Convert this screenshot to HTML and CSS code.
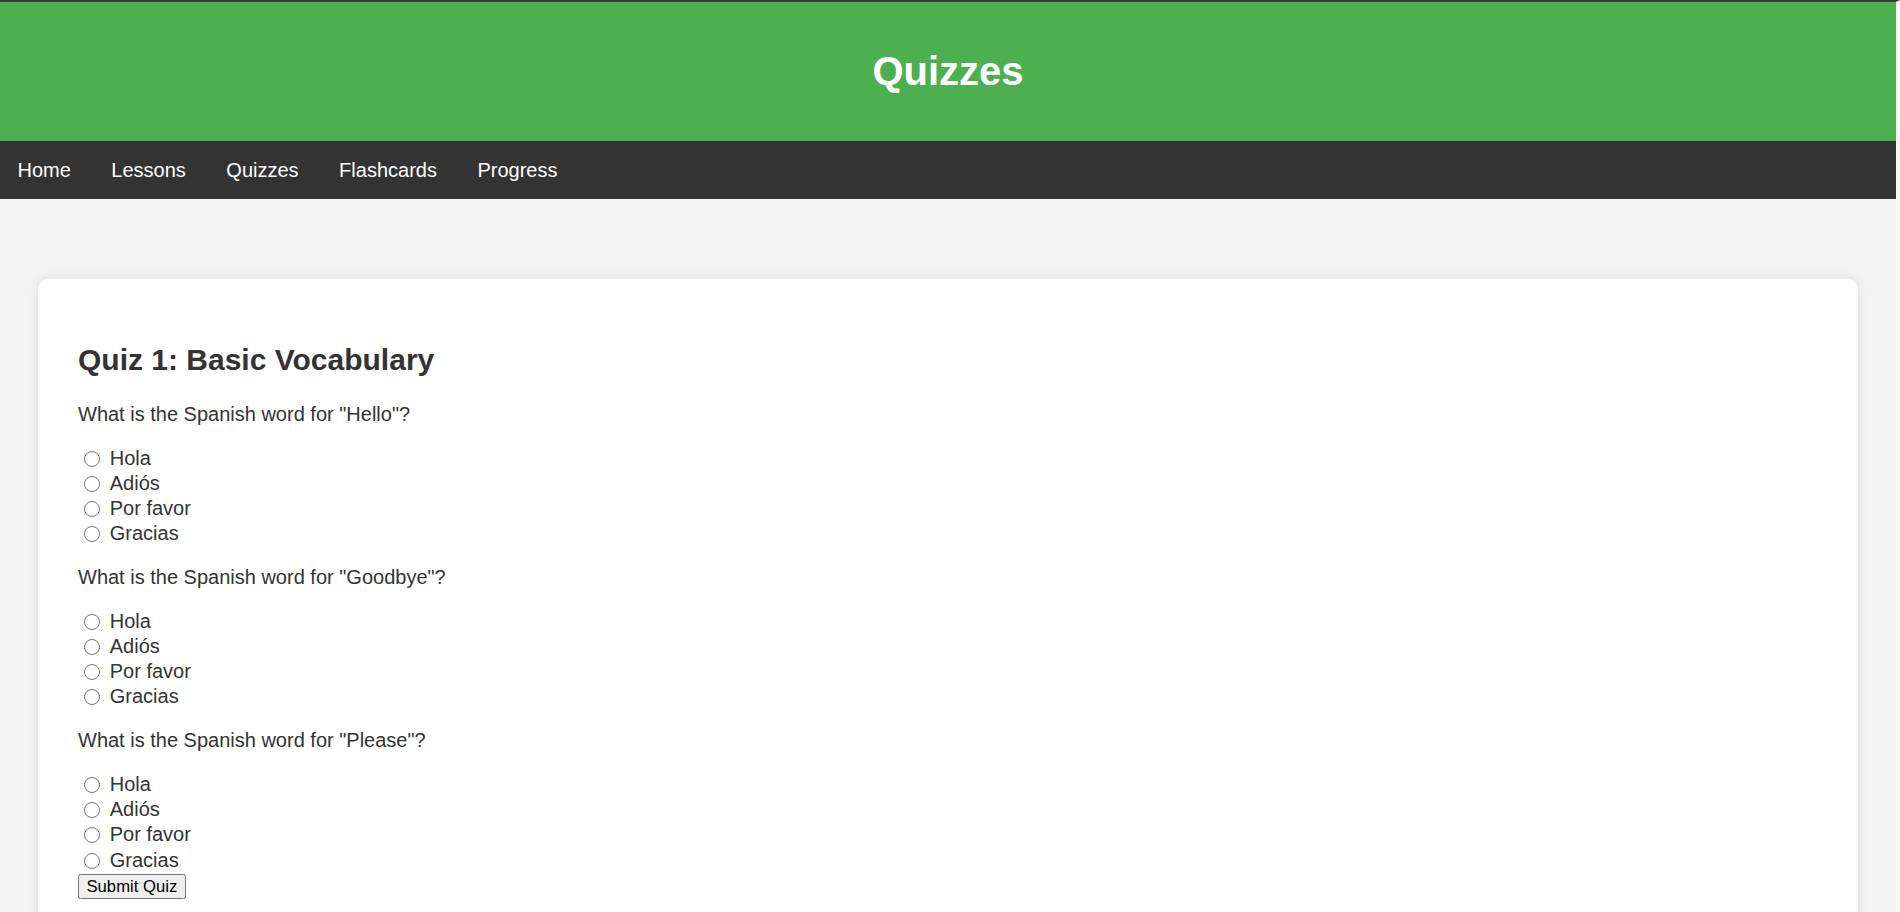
FILE: index.html
```html
<!DOCTYPE html>
<html lang="en">
<head>
<meta charset="utf-8">
<title>Quizzes</title>
<link rel="stylesheet" href="styles.css">
</head>
<body>
<header class="site-header">
  <h1 class="site-title">Quizzes</h1>
</header>
<nav class="main-nav">
  <a href="#" class="nav-link">Home</a>
  <a href="#" class="nav-link">Lessons</a>
  <a href="#" class="nav-link">Quizzes</a>
  <a href="#" class="nav-link">Flashcards</a>
  <a href="#" class="nav-link">Progress</a>
</nav>
<main class="content">
  <section class="card">
    <h2 class="quiz-title">Quiz 1: Basic Vocabulary</h2>
    <form class="quiz-form">
      <p class="question">What is the Spanish word for "Hello"?</p>
      <div class="options">
        <label class="option"><input type="radio" name="q1" class="radio"><span>Hola</span></label>
        <label class="option"><input type="radio" name="q1" class="radio"><span>Adiós</span></label>
        <label class="option"><input type="radio" name="q1" class="radio"><span>Por favor</span></label>
        <label class="option"><input type="radio" name="q1" class="radio"><span>Gracias</span></label>
      </div>
      <p class="question">What is the Spanish word for "Goodbye"?</p>
      <div class="options">
        <label class="option"><input type="radio" name="q2" class="radio"><span>Hola</span></label>
        <label class="option"><input type="radio" name="q2" class="radio"><span>Adiós</span></label>
        <label class="option"><input type="radio" name="q2" class="radio"><span>Por favor</span></label>
        <label class="option"><input type="radio" name="q2" class="radio"><span>Gracias</span></label>
      </div>
      <p class="question">What is the Spanish word for "Please"?</p>
      <div class="options">
        <label class="option"><input type="radio" name="q3" class="radio"><span>Hola</span></label>
        <label class="option"><input type="radio" name="q3" class="radio"><span>Adiós</span></label>
        <label class="option"><input type="radio" name="q3" class="radio"><span>Por favor</span></label>
        <label class="option"><input type="radio" name="q3" class="radio"><span>Gracias</span></label>
      </div>
      <div class="actions">
        <button type="button" class="submit-btn">Submit Quiz</button>
      </div>
    </form>
  </section>
</main>
</body>
</html>
```

FILE: styles.css
```css
html {
  overflow: hidden;
  background: #f4f4f4;
}

body {
  margin: 0;
  border-top: 2px solid #3a3a3a;
  border-right: 4px solid #f8f8f8;
  background: #f4f4f4;
  font-family: "Liberation Sans", Arial, sans-serif;
  color: #333;
}

.site-header {
  background: #4caf50;
  padding: 20px 0;
  text-align: center;
}

.site-title {
  margin: 27px 0;
  font-size: 40px;
  font-weight: bold;
  color: #fff;
}

.main-nav {
  display: flex;
  gap: 5.5px;
  background: #333;
}

.nav-link {
  padding: 17.5px;
  font-size: 20px;
  line-height: 23px;
  color: #fff;
  text-decoration: none;
}

.content {
  padding: 80px 38px 40px;
}

.card {
  background: #fff;
  border-radius: 10px;
  box-shadow: 0 0 12px rgba(0, 0, 0, 0.1);
  padding: 40px;
}

.quiz-title {
  margin: 24px 0 25px;
  font-size: 30px;
  line-height: 34.5px;
  color: #333;
}

.quiz-form {
  margin: 0;
}

.question {
  margin: 20px 0;
  font-size: 20px;
  line-height: 23px;
}

.options {
  display: flex;
  flex-direction: column;
}

.option {
  display: flex;
  align-items: center;
  height: 25.1px;
  font-size: 20px;
  color: #333;
}

.radio {
  width: 16px;
  height: 16px;
  margin: 0 9.5px 0 6.25px;
  flex: none;
  position: relative;
  top: 0.5px;
}

.actions {
  display: flex;
  padding-top: 1.5px;
}

.submit-btn {
  margin: 0;
  height: 25px;
  padding: 1px 7.5px;
  font-family: "Liberation Sans", Arial, sans-serif;
  font-size: 16.67px;
  color: #000;
  background: #efefef;
  border: 1.25px solid #767676;
  border-radius: 2.5px;
}
```
